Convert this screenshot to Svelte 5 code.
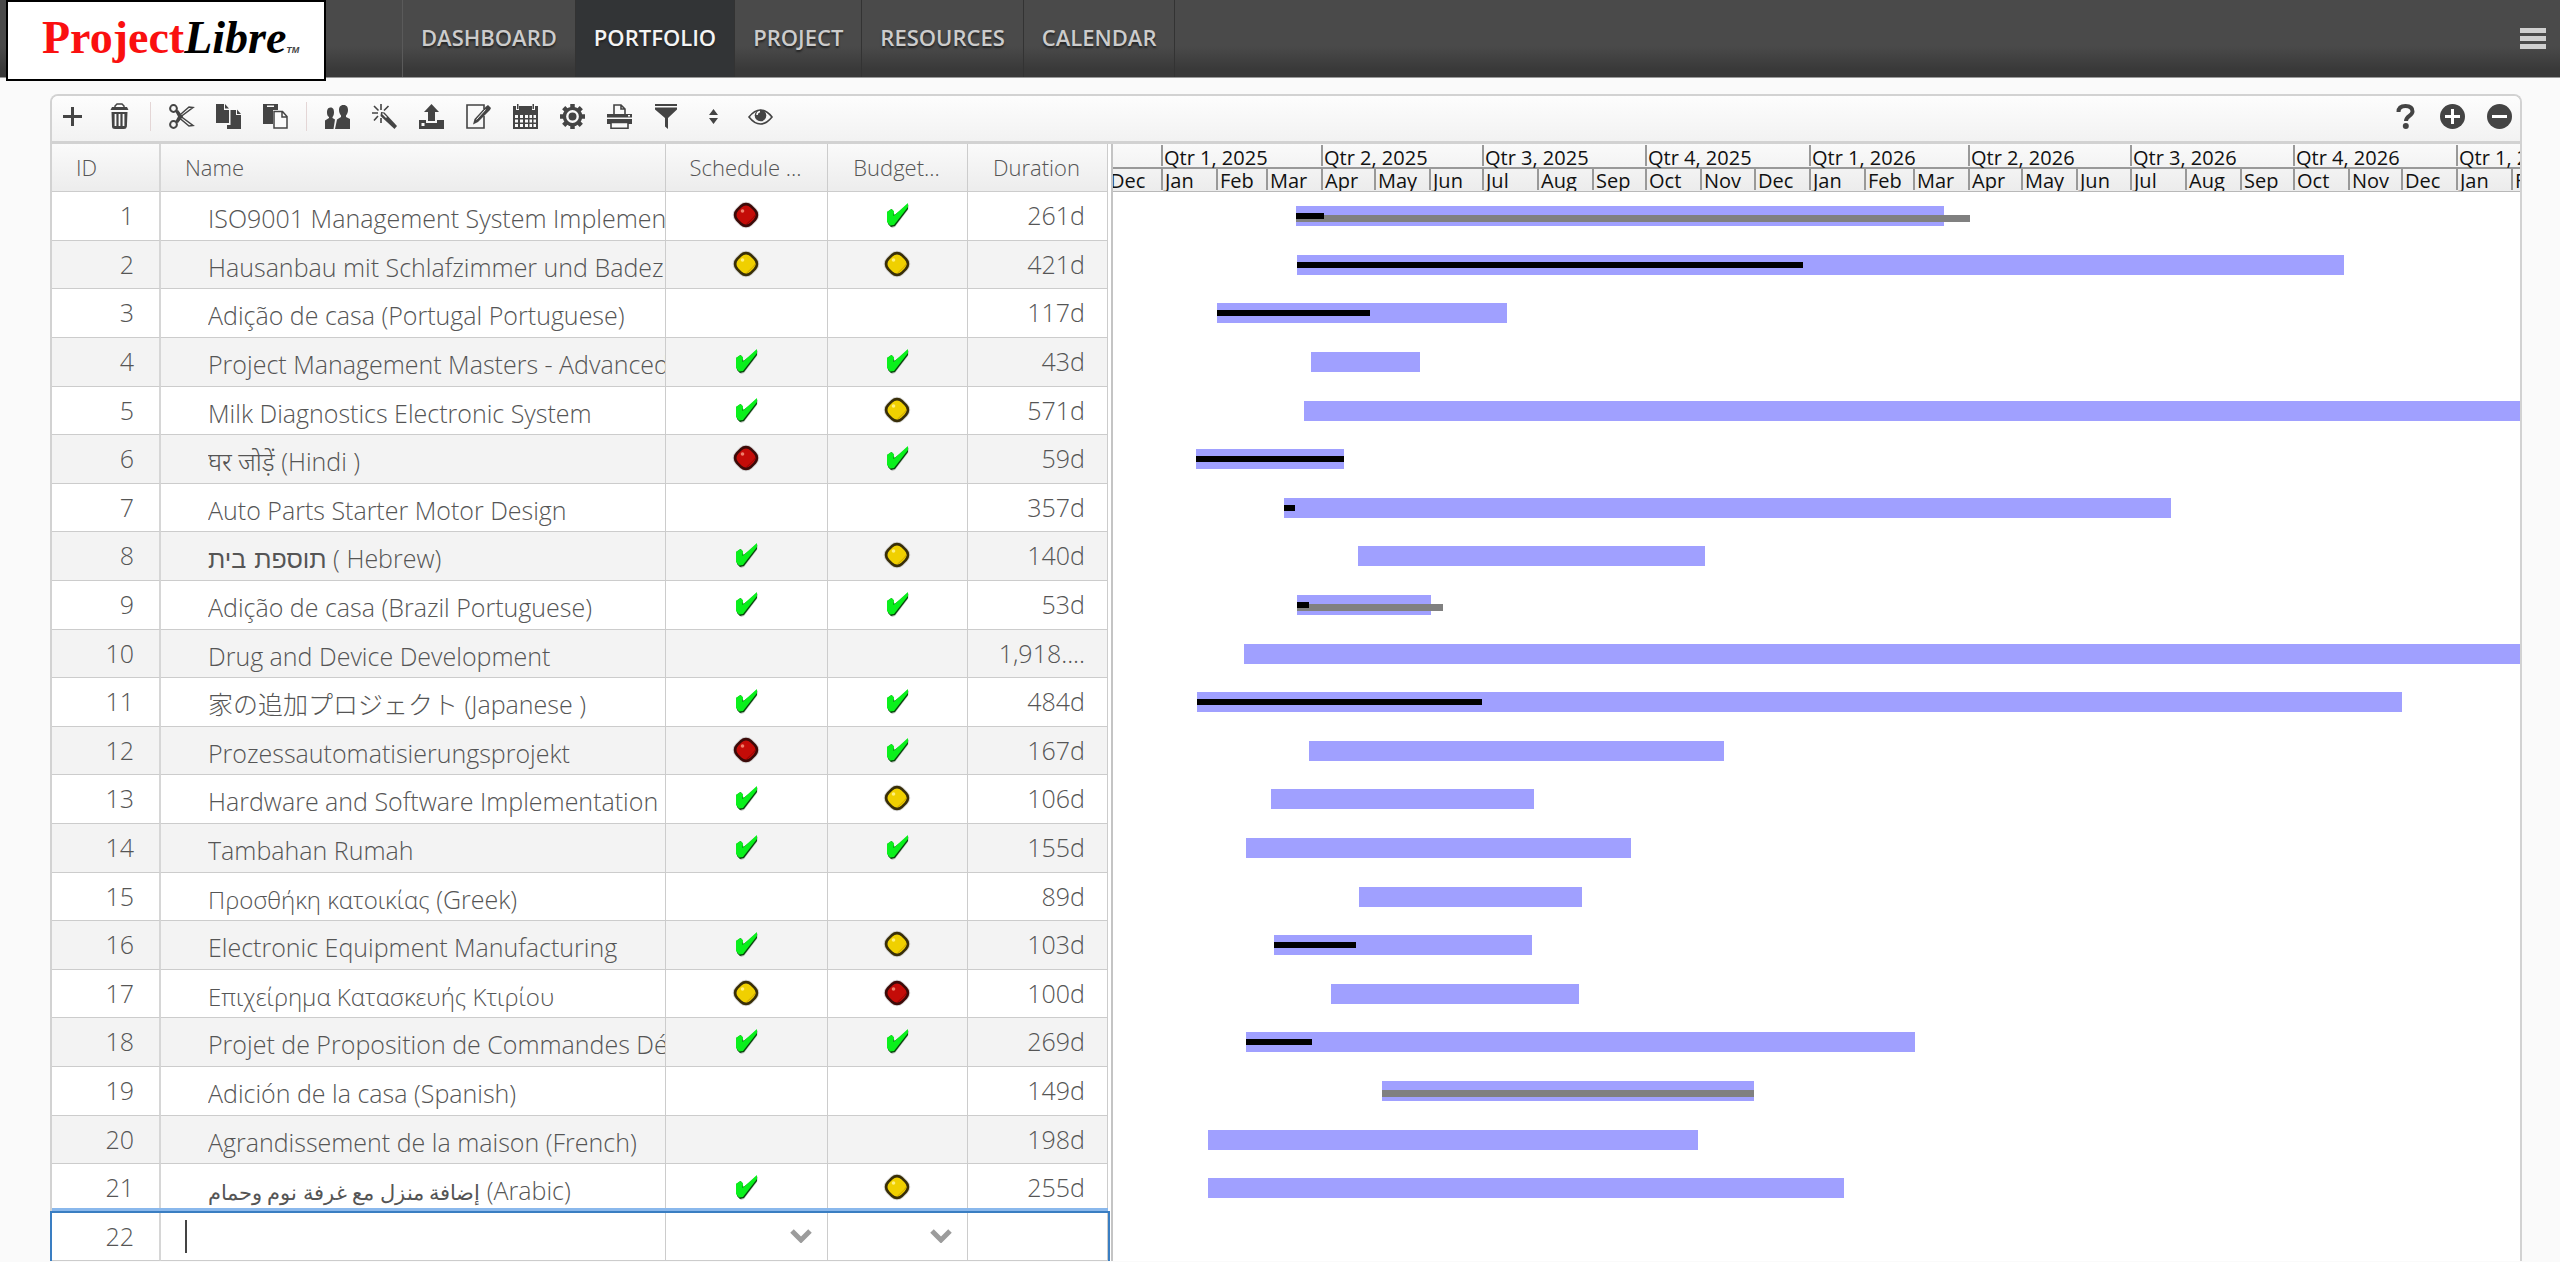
<script lang="ts">
  type Status = '' | 'ok' | 'warn' | 'bad'

  type Row = {
    name: string
    // leading part of the name in its own script
    native?: string
    lang?: string
    schedule: Status
    budget: Status
    duration: string
    // chart positions in px from the left edge of the timeline
    bar: [number, number]
    done?: number
    baseline?: number
  }

  let pages = ['Dashboard', 'Portfolio', 'Project', 'Resources', 'Calendar']
  let current = 'Portfolio'

  const END = 4000

  let rows: Row[] = [
    { name: 'ISO9001 Management System Implementation', schedule: 'bad', budget: 'ok', duration: '261d', bar: [183, 831], done: 211, baseline: 857 },
    { name: 'Hausanbau mit Schlafzimmer und Badezimmer', schedule: 'warn', budget: 'warn', duration: '421d', bar: [184, 1231], done: 690 },
    { name: 'Adição de casa (Portugal Portuguese)', schedule: '', budget: '', duration: '117d', bar: [104, 394], done: 257 },
    { name: 'Project Management Masters - Advanced', schedule: 'ok', budget: 'ok', duration: '43d', bar: [198, 307] },
    { name: 'Milk Diagnostics Electronic System', schedule: 'ok', budget: 'warn', duration: '571d', bar: [191, END] },
    { name: 'घर जोड़ें (Hindi )', schedule: 'bad', budget: 'ok', duration: '59d', bar: [83, 231], done: 231 },
    { name: 'Auto Parts Starter Motor Design', schedule: '', budget: '', duration: '357d', bar: [171, 1058], done: 182 },
    { native: 'תוספת בית', lang: 'he', name: ' ( Hebrew)', schedule: 'ok', budget: 'warn', duration: '140d', bar: [245, 592] },
    { name: 'Adição de casa (Brazil Portuguese)', schedule: 'ok', budget: 'ok', duration: '53d', bar: [184, 318], done: 196, baseline: 330 },
    { name: 'Drug and Device Development', schedule: '', budget: '', duration: '1,918....', bar: [131, END] },
    { name: '家の追加プロジェクト (Japanese )', schedule: 'ok', budget: 'ok', duration: '484d', bar: [84, 1289], done: 369 },
    { name: 'Prozessautomatisierungsprojekt', schedule: 'bad', budget: 'ok', duration: '167d', bar: [196, 611] },
    { name: 'Hardware and Software Implementation', schedule: 'ok', budget: 'warn', duration: '106d', bar: [158, 421] },
    { name: 'Tambahan Rumah', schedule: 'ok', budget: 'ok', duration: '155d', bar: [133, 518] },
    { native: 'Προσθήκη κατοικίας', lang: 'el', name: ' (Greek)', schedule: '', budget: '', duration: '89d', bar: [246, 469] },
    { name: 'Electronic Equipment Manufacturing', schedule: 'ok', budget: 'warn', duration: '103d', bar: [161, 419], done: 243 },
    { native: 'Επιχείρημα Κατασκευής Κτιρίου', lang: 'el', name: '', schedule: 'warn', budget: 'bad', duration: '100d', bar: [218, 466] },
    { name: 'Projet de Proposition de Commandes Détaillé', schedule: 'ok', budget: 'ok', duration: '269d', bar: [133, 802], done: 199 },
    { name: 'Adición de la casa (Spanish)', schedule: '', budget: '', duration: '149d', bar: [269, 641], baseline: 641 },
    { name: 'Agrandissement de la maison (French)', schedule: '', budget: '', duration: '198d', bar: [95, 585] },
    { native: 'إضافة منزل مع غرفة نوم وحمام', lang: 'ar', name: ' (Arabic)', schedule: 'ok', budget: 'warn', duration: '255d', bar: [95, 731] },
  ]

  // timescale
  const PX_PER_DAY = 1.774
  const ORIGIN = 49
  const DAY = 24 * 60 * 60 * 1000
  const MONTHS = ['Jan', 'Feb', 'Mar', 'Apr', 'May', 'Jun', 'Jul', 'Aug', 'Sep', 'Oct', 'Nov', 'Dec']

  let months = Array.from({ length: 27 }, (_, i) => {
    let time = Date.UTC(2024, 11 + i, 1)
    let date = new Date(time)
    let month = date.getUTCMonth()
    return {
      label: MONTHS[month],
      quarter: month % 3 === 0 ? `Qtr ${month / 3 + 1}, ${date.getUTCFullYear()}` : '',
      x: ORIGIN + Math.round(((time - Date.UTC(2025, 0, 1)) / DAY) * PX_PER_DAY),
    }
  })

  let newName = ''
  let newSchedule = ''
  let newBudget = ''
</script>

{#snippet status(kind: Status)}
  {#if kind === 'ok'}
    <svg class="status" viewBox="0 0 28 28" role="img" aria-label="OK">
      <path d="M4 12l5-3 3 5L24 3l2 1-1 5-13 17-3 1-3-3z" fill="#888" opacity=".5" />
      <path d="M4 11l5-3 2.500 6L25 4v4L12 25l-4 1-3-3z" fill="#06460a" />
      <path d="M4 11l4-3 3 2-.5 5L25 2v4L11 24l-4 .5L4 21z" fill="#0af01c" />
    </svg>
  {:else if kind}
    <svg class="status" viewBox="0 0 28 28" role="img" aria-label={kind === 'bad' ? 'Late' : 'Warning'}>
      <rect x="2" y="2" width="24" height="24" rx="9" transform="rotate(45 14 14)" fill="#999" opacity=".4" />
      <rect x="3" y="3" width="22" height="22" rx="8" transform="rotate(45 14 14)" fill={kind === 'bad' ? '#3c0a08' : '#382e08'} />
      <rect x="5.500" y="5.500" width="17" height="17" rx="6" transform="rotate(45 14 14)" fill={kind === 'bad' ? '#c40c08' : '#f0d000'} />
      <path d="M15 23.500l8.500-8.500V13l-3 4-6.500 6z" fill={kind === 'bad' ? '#960604' : '#cfa800'} />
      <circle cx="10.500" cy="10" r="1.800" fill={kind === 'bad' ? '#f0806c' : '#fff07a'} />
    </svg>
  {/if}
{/snippet}

<div class="page">
  <header class="topbar">
    <a class="logo" href="#home" aria-label="ProjectLibre">
      <span class="project">Project</span><span class="libre">Libre</span><span class="tm">TM</span>
    </a>
    <nav class="nav">
      {#each pages as page}
        <a class="nav-item" class:active={page === current} href="#{page.toLowerCase()}">{page.toUpperCase()}</a>
      {/each}
    </nav>
    <button class="menu" aria-label="Menu">
      <svg viewBox="0 0 26 21"><path d="M0 0h26v5H0zM0 8h26v5H0zM0 16h26v5H0z" fill="#d0d0d0" /></svg>
    </button>
  </header>

  <main class="panel">
    <div class="toolbar">
      <button class="tool" aria-label="Add">
        <svg viewBox="0 0 25 25"><path d="M11 3h3v8h8v3h-8v8h-3v-8H3v-3h8z" /></svg>
      </button>
      <button class="tool" aria-label="Delete">
        <svg viewBox="0 0 25 25">
          <path d="M8 4V2l2-2h5l2 2v2" fill="none" stroke="#444" stroke-width="1.500" />
          <path d="M5 3h15l1.500 3h-18zM4.500 8h16l-.6 14.500Q19.500 25 17 25H8q-3 0-3-2.500z" />
          <path d="M8.500 10v12M12.500 10v12M16.500 10v12" stroke="#fafafa" stroke-width="1.800" />
        </svg>
      </button>
      <span class="sep"></span>
      <button class="tool" aria-label="Cut">
        <svg viewBox="0 0 25 25">
          <g fill="none" stroke="#444">
            <circle cx="4.500" cy="4.500" r="3.400" stroke-width="2" />
            <circle cx="4.500" cy="20.500" r="3.400" stroke-width="2" />
            <path d="M7 7l5 5.500 12 9-4 .5-9-7.500-4 4" stroke-width="1.500" />
            <path d="M7 18l5-5.500 12-9-4-.5-8 7" stroke-width="1.500" />
          </g>
          <path d="M6 7l3-1 5 6.500-5 6.500-3-1 3-5.500z" />
        </svg>
      </button>
      <button class="tool" aria-label="Copy">
        <svg viewBox="0 0 25 25">
          <path d="M0 0h8v6h5v13H0zM9 0l4 4.500H9z" />
          <path d="M14.500 6H20v5h5v14H11v-4h3.500zM21 5.500l4 4.500h-4z" />
        </svg>
      </button>
      <button class="tool" aria-label="Paste">
        <svg viewBox="0 0 25 25">
          <path d="M0 0h15v6h-5v14H0z" />
          <path d="M4 1.500h7v1.500H4z" fill="#fafafa" />
          <path d="M11 7.500h8.500l4.500 5V24H11zM19 7.500V13h5" fill="#fafafa" stroke="#444" stroke-width="1.500" />
        </svg>
      </button>
      <span class="sep"></span>
      <button class="tool" aria-label="Resources">
        <svg viewBox="0 0 25 25">
          <path d="M5.500 3.500C8.500 3.500 9 6 9 8.500S8 12.500 7.500 13v1l2.500 1.500L8.500 25H0v-8.500L4 14v-1C2.500 12 2 10.500 2 8.500s.5-5 3.500-5z" />
          <path d="M18.500 1c3.500 0 4.500 2.500 4.500 5s-1 4.500-2 5.500V13l4 2v10H10l2-9.500 4-2.500v-1.500c-1-1-2-3-2-5.500s1-5 4.500-5z" />
        </svg>
      </button>
      <button class="tool" aria-label="Wizard">
        <svg viewBox="0 0 25 25">
          <path d="M9 0v6M2 2l4.500 4.500M0 9h6M2 16.500l4-4.500M9 19v-5M16.500 2L12 6.500" fill="none" stroke="#444" stroke-width="1.600" />
          <path d="M9 8l3.500.5L25 22l-2.500 3L8.500 12z" />
          <path d="M10.500 9.500l4 4" stroke="#fafafa" stroke-width="1.200" />
        </svg>
      </button>
      <button class="tool" aria-label="Export">
        <svg viewBox="0 0 25 25">
          <path d="M12.500 0L20 8h-4v9H9V8H5z" />
          <path d="M0 16h7v3h11v-3h7v9H0z" />
          <path d="M2.500 19h3v3h-3z" fill="#fafafa" />
        </svg>
      </button>
      <button class="tool" aria-label="Edit">
        <svg viewBox="0 0 25 25">
          <path d="M18 12v12H1V1h17v4" fill="none" stroke="#444" stroke-width="1.600" />
          <path d="M20 2.500L22 1l3 3-1 2L12 18l-5 2.500L8.500 15z" />
          <path d="M10.500 15.500L19.500 5.500" stroke="#fafafa" stroke-width="1" />
        </svg>
      </button>
      <button class="tool" aria-label="Calendar">
        <svg viewBox="0 0 25 25">
          <path d="M0 2h3v4h3V2h13v4h3V2h3v23H0zM4 0h1.500v5H4zM19.500 0H21v5h-1.500z" />
          <path d="M2 11h3v3H2zM7 11h3v3H7zM12 11h3v3h-3zM16.500 11h2.500v3h-2.500zM20.500 11H23v3h-2.500zM2 15.500h3v3H2zM7 15.500h3v3H7zM12 15.500h3v3h-3zM16.500 15.500h2.500v3h-2.500zM20.500 15.500H23v3h-2.500zM2 20h3v3H2zM7 20h3v3H7zM12 20h3v3h-3zM16.500 20h2.500v3h-2.500zM20.500 20H23v3h-2.500z" fill="#fafafa" />
        </svg>
      </button>
      <button class="tool" aria-label="Settings">
        <svg viewBox="0 0 25 25">
          <g stroke="#444" stroke-width="4.500">
            <path d="M12.500 0v25M0 12.500h25M3.700 3.700l17.600 17.600M21.300 3.700L3.700 21.300" />
          </g>
          <circle cx="12.500" cy="12.500" r="9.800" />
          <circle cx="12.500" cy="12.500" r="5.200" fill="#444" stroke="#fafafa" stroke-width="2.400" />
        </svg>
      </button>
      <button class="tool" aria-label="Print">
        <svg viewBox="0 0 25 25">
          <path d="M7 10V1h7l4 4v5M14 1v4h4" fill="none" stroke="#444" stroke-width="1.600" />
          <path d="M0 10h25v3.500H0zM0 15h25v5H0z" />
          <path d="M21 11h2v1.500h-2z" fill="#fafafa" />
          <path d="M4 18.500h17v5.700H4z" fill="#fafafa" stroke="#444" stroke-width="1.600" />
        </svg>
      </button>
      <button class="tool" aria-label="Filter">
        <svg viewBox="0 0 25 25">
          <path d="M1 0h22v2H1zM1 3.500h22v2L14 14v11l-3-2.500V14L1 5.500z" />
        </svg>
      </button>
      <button class="tool" aria-label="Sort">
        <svg viewBox="0 0 25 25"><path d="M12.500 5l4.500 6H8zM12.500 20L8 14h9z" /></svg>
      </button>
      <button class="tool" aria-label="View">
        <svg viewBox="0 0 25 25">
          <path d="M1 13Q6.500 6 12.500 6T24 13q-5.500 7-11.500 7T1 13z" fill="none" stroke="#444" stroke-width="1.600" />
          <circle cx="12.500" cy="11.500" r="5.800" />
          <path d="M9 11q0-3 3-3.500" fill="none" stroke="#fafafa" stroke-width="1.500" />
        </svg>
      </button>
      <button class="tool help" aria-label="Help">
        <svg viewBox="0 0 25 25">
          <path d="M5.500 8Q5.500 2 12.500 2t7 5.500c0 4.500-6.500 4.500-6.500 9.500" fill="none" stroke="#444" stroke-width="4" />
          <circle cx="12.800" cy="22" r="3" />
        </svg>
      </button>
      <button class="tool" aria-label="Zoom in">
        <svg viewBox="0 0 25 25">
          <circle cx="12.500" cy="12.500" r="12.500" />
          <path d="M12.500 5v15M5 12.500h15" stroke="#fff" stroke-width="3" />
        </svg>
      </button>
      <button class="tool" aria-label="Zoom out">
        <svg viewBox="0 0 25 25">
          <circle cx="12.500" cy="12.500" r="12.500" />
          <path d="M5 12.500h15" stroke="#fff" stroke-width="3" />
        </svg>
      </button>
    </div>

    <div class="split">
      <table class="grid">
        <colgroup>
          <col class="col-id" />
          <col class="col-name" />
          <col class="col-schedule" />
          <col class="col-budget" />
          <col class="col-duration" />
        </colgroup>
        <thead>
          <tr>
            <th class="id">ID</th>
            <th class="name">Name</th>
            <th>Schedule ...</th>
            <th>Budget...</th>
            <th>Duration</th>
          </tr>
        </thead>
        <tbody>
          {#each rows as row, i}
            <tr class="line">
              <td class="id">{i + 1}</td>
              <td class="name">
                <div>{#if row.native}<span lang={row.lang}>{row.native}</span>{/if}{row.name}</div>
              </td>
              <td class="center">{@render status(row.schedule)}</td>
              <td class="center">{@render status(row.budget)}</td>
              <td class="duration">{row.duration}</td>
            </tr>
          {/each}
          <tr class="line editing">
            <td class="id">{rows.length + 1}</td>
            <td class="field"><input aria-label="Name" bind:value={newName} /></td>
            <td>
              <div class="pick">
                <select aria-label="Schedule status" bind:value={newSchedule}><option value=""></option></select>
                <svg viewBox="0 0 22 14"><path d="M2 2l9 9 9-9" /></svg>
              </div>
            </td>
            <td>
              <div class="pick">
                <select aria-label="Budget status" bind:value={newBudget}><option value=""></option></select>
                <svg viewBox="0 0 22 14"><path d="M2 2l9 9 9-9" /></svg>
              </div>
            </td>
            <td></td>
          </tr>
        </tbody>
      </table>

      <div class="chart">
        <svg class="timescale" role="img" aria-label="Timescale">
          <line x1="0" x2="100%" y1="24" y2="24" />
          {#each months as month}
            {#if month.quarter}
              <line x1={month.x} x2={month.x} y1="1" y2="22" />
              <text x={month.x + 2} y="21">{month.quarter}</text>
            {/if}
            <line x1={month.x} x2={month.x} y1="25" y2="46" />
            <text x={month.x + 3} y="44">{month.label}</text>
          {/each}
        </svg>
        <div class="lanes">
          {#each rows as row}
            <svg class="line lane">
              <rect x={row.bar[0]} y="14" width={row.bar[1] - row.bar[0]} height="20" fill="#a0a0ff" />
              {#if row.baseline}
                <rect x={row.bar[0]} y="23" width={row.baseline - row.bar[0]} height="7" fill="#808080" />
              {/if}
              {#if row.done}
                <rect x={row.bar[0]} y="21" width={row.done - row.bar[0]} height="6" fill="#000" />
              {/if}
            </svg>
          {/each}
        </div>
      </div>
    </div>
  </main>
</div>

<style>
  :global(body) {
    background: #fafafa;
    font-family: 'Open Sans', 'Noto Sans', 'Noto Sans CJK JP', sans-serif;
    overflow: hidden;
  }

  .topbar {
    display: flex;
    align-items: flex-start;
    height: 77px;
    padding: 0 14px 0 6px;
    background: linear-gradient(#4a4a4a 60%, #393939 90%);
    box-shadow: 0 1px 0 #999;
  }

  .logo {
    display: flex;
    align-items: baseline;
    box-sizing: border-box;
    width: 320px;
    height: 81px;
    padding: 9px 0 0 34px;
    border: 2px solid #000;
    background: #fff;
    font: bold 46px/54px 'Liberation Serif', serif;
    text-decoration: none;
    position: relative;
  }

  .project {
    color: #fa1010;
  }

  .libre {
    color: #000;
    font-style: italic;
  }

  .tm {
    color: #444;
    font: italic bold 9px 'Liberation Sans', sans-serif;
  }

  .nav {
    display: flex;
    margin-left: 76px;
    border-left: 1px solid #5a5a5a;
  }

  .nav-item {
    padding: 0 18px;
    border-right: 1px solid #333;
    font-size: 22px;
    font-weight: 600;
    line-height: 74px;
    height: 77px;
    color: #ccc;
    text-decoration: none;
    text-shadow: 0 2px 2px #222;
  }

  .nav-item.active {
    background: #323436;
    color: #f4f4f4;
  }

  button {
    padding: 0;
    border: 0;
    background: none;
    cursor: pointer;
  }

  .menu {
    width: 26px;
    height: 21px;
    margin: 28px 0 0 auto;
  }

  .menu svg {
    display: block;
  }

  .panel {
    margin: 17px 38px 0 50px;
    border: 2px solid #d2d2d2;
    border-bottom: 0;
    border-radius: 8px 8px 0 0;
    background: #fff;
  }

  .toolbar {
    display: flex;
    align-items: center;
    gap: 6px;
    height: 41px;
    padding-bottom: 4px;
    border-bottom: 3px solid #d2d2d2;
    border-radius: 6px 6px 0 0;
    background: linear-gradient(#fdfdfd, #f2f2f2);
  }

  .tool {
    display: flex;
    justify-content: center;
    width: 41px;
  }

  .tool svg {
    width: 25px;
    height: 25px;
    fill: #444;
    overflow: visible;
  }

  .help {
    margin-left: auto;
  }

  .sep {
    width: 9px;
    height: 29px;
    background: linear-gradient(#e4d6d6, #e4d6d6) center / 1px 100% no-repeat;
  }

  .split {
    display: flex;
    gap: 3px;
  }

  .grid {
    flex: none;
    width: 1056px;
    table-layout: fixed;
    border-spacing: 0;
    color: #555;
    font-size: 25px;
    font-weight: 300;
  }

  .col-id {
    width: 109px;
  }

  .col-name {
    width: 505px;
  }

  .col-schedule {
    width: 162px;
  }

  .col-budget {
    width: 140px;
  }

  .col-duration {
    width: 140px;
  }

  th,
  td {
    padding: 0 2px 2px 0;
    border-right: 1px solid #ccc;
    border-bottom: 1px solid #ccc;
    line-height: 32px;
    white-space: nowrap;
    overflow: hidden;
  }

  thead tr {
    height: 48px;
    background: linear-gradient(#fafafa, #ececec);
  }

  th {
    font-size: 22px;
    font-weight: 300;
  }

  th.id,
  th.name {
    padding-left: 24px;
    text-align: left;
  }

  .id {
    border-right: 2px solid #d6d6d6;
  }

  /* 22 lines share the height unevenly: two out of five are one pixel shorter */
  .line {
    height: 49px;
  }

  .line:nth-child(5n),
  .line:nth-child(5n + 2) {
    height: 48px;
  }

  tbody tr:nth-child(even) {
    background: #f3f3f3;
  }

  td.id {
    padding-right: 25px;
    text-align: right;
  }

  td.name {
    padding: 4px 0 0 47px;
  }

  td.name div {
    line-height: 40px;
    height: 40px;
    overflow: hidden;
  }

  [lang='ar'] {
    font-size: 21px;
  }

  [lang='he'] {
    font-family: 'DejaVu Sans', sans-serif;
    font-size: 25px;
  }

  [lang='el'] {
    font-size: 24px;
  }

  td.center {
    text-align: center;
  }

  td.duration {
    padding-right: 22px;
    text-align: right;
  }

  .status {
    display: block;
    width: 28px;
    height: 28px;
    margin: 0 auto;
  }

  tbody tr.editing {
    background: #fff;
    outline: 2px solid #3a7ec2;
    box-shadow: 0 -5px 0 #8ab8ec;
  }

  .field::before {
    content: '';
    display: inline-block;
    width: 2px;
    height: 33px;
    margin-left: 24px;
    background: #444;
    vertical-align: middle;
  }

  input,
  select {
    border: 0;
    outline: none;
    background: none;
    color: inherit;
    font: inherit;
    appearance: none;
  }

  input {
    width: 440px;
    height: 32px;
    padding: 0;
    vertical-align: middle;
  }

  .pick {
    display: flex;
    align-items: center;
    padding-right: 13px;
  }

  select {
    flex: 1;
    min-width: 0;
    height: 32px;
  }

  .pick svg {
    width: 22px;
    height: 14px;
    fill: none;
    stroke: #9c9c9c;
    stroke-width: 5px;
  }

  .chart {
    flex: 1;
    min-width: 0;
    border-left: 2px solid #c4c4c4;
  }

  .timescale {
    display: block;
    width: 100%;
    height: 47px;
    border-bottom: 1px solid #b8b8b8;
    background: linear-gradient(#fafafa, #ececec);
    overflow: hidden;
  }

  .timescale line {
    stroke: #999;
    stroke-width: 2px;
    shape-rendering: crispEdges;
  }

  .timescale text {
    font-size: 20px;
    fill: #111;
  }

  .lane {
    display: block;
    width: 100%;
    overflow: hidden;
  }
</style>
